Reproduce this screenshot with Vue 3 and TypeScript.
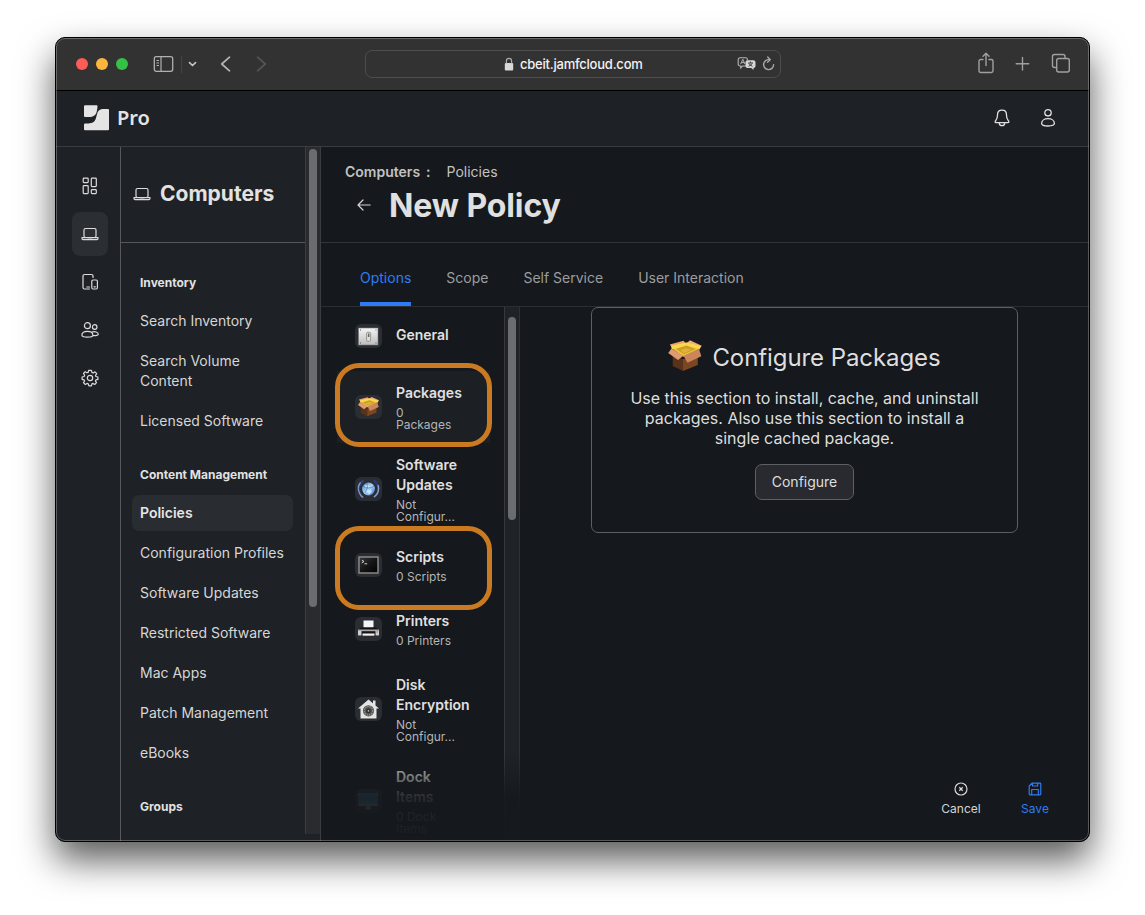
<script setup lang="ts">
interface NavItem { label: string; active?: boolean }
interface NavSection { title: string; items: NavItem[] }
interface Payload { id: string; title: string; status?: string; active?: boolean }

const railItems = ['dashboard', 'computers', 'devices', 'users', 'settings']

const sections: NavSection[] = [
  {
    title: 'Inventory',
    items: [{ label: 'Search Inventory' }, { label: 'Search Volume Content' }, { label: 'Licensed Software' }],
  },
  {
    title: 'Content Management',
    items: [
      { label: 'Policies', active: true },
      { label: 'Configuration Profiles' },
      { label: 'Software Updates' },
      { label: 'Restricted Software' },
      { label: 'Mac Apps' },
      { label: 'Patch Management' },
      { label: 'eBooks' },
    ],
  },
  { title: 'Groups', items: [] },
]

const tabs = ['Options', 'Scope', 'Self Service', 'User Interaction']

const payloads: Payload[] = [
  { id: 'general', title: 'General' },
  { id: 'packages', title: 'Packages', status: '0\nPackages', active: true },
  { id: 'updates', title: 'Software\nUpdates', status: 'Not\nConfigur...' },
  { id: 'scripts', title: 'Scripts', status: '0 Scripts' },
  { id: 'printers', title: 'Printers', status: '0 Printers' },
  { id: 'disk', title: 'Disk\nEncryption', status: 'Not\nConfigur...' },
  { id: 'dock', title: 'Dock\nItems', status: '0 Dock\nItems' },
]
</script>

<template>
  <div class="page">
    <svg class="defs" width="0" height="0" aria-hidden="true">
      <defs>
        <linearGradient id="plate" x1="0" y1="0" x2="0" y2="1"><stop offset="0" stop-color="#f4f4f4" /><stop offset="1" stop-color="#bdbdbd" /></linearGradient>
        <linearGradient id="globe" x1="0" y1="0" x2="1" y2="1"><stop offset="0" stop-color="#4a7fc0" /><stop offset=".5" stop-color="#a8d8f4" /><stop offset="1" stop-color="#3c66c8" /></linearGradient>
        <linearGradient id="term" x1="0" y1="0" x2="1" y2="1"><stop offset="0" stop-color="#3a3a3a" /><stop offset=".5" stop-color="#151515" /><stop offset="1" stop-color="#000" /></linearGradient>
        <linearGradient id="screen" x1="0" y1="0" x2="0" y2="1"><stop offset="0" stop-color="#2a6fa8" /><stop offset="1" stop-color="#49c3ef" /></linearGradient>
        <symbol id="laptop" viewBox="0 0 18 16">
          <rect x="3" y="2.5" width="12" height="9" rx="1.5" />
          <path d="M1 11.6H17V12.4A1.2 1.2 0 0 1 15.8 13.6H2.2A1.2 1.2 0 0 1 1 12.4ZM7 12H11" />
        </symbol>
        <symbol id="box" viewBox="0 0 34 32">
          <path d="M4.700 16V26L15 31V19Z" fill="#5a3219" />
          <path d="M15 19V31L29.800 25V16Z" fill="#7b4723" />
          <path d="M1.800 4.500 15.500.7 18 3.500 4.500 8.500Z" fill="#efa468" />
          <path d="M22 .3 33.700 5.700 31.300 9.500 17.500 4Z" fill="#f0ac7c" />
          <path d="M3.300 8 18.500 2.700 32 8.500 16 17Z" fill="#efc436" />
          <path d="M3 5.800 18.500 2.500 32.800 6 31.500 9 18.500 5.700 4 9.300Z" fill="#f8d94c" />
          <path d="M8 9 18.500 5.500 27.500 9 16 14.200Z" fill="#cc9d2b" />
          <path d="M12.500 10.200 18 8.200 23.500 9.700 16 13.200Z" fill="#dfb33a" />
          <path d="M3.500 8.500 .2 13 10 20 15.500 15.700Z" fill="#df9a70" />
          <path d="M15.500 15.700 31 8.800 33.300 16.300 19.500 22.800Z" fill="#cd855a" />
        </symbol>
      </defs>
    </svg>

    <div class="window">
      <header class="toolbar">
        <div class="lights"><i class="red" /><i class="amber" /><i class="green" /></div>
        <svg class="tb-sidebar" width="66" height="24" viewBox="0 0 66 24" fill="none">
          <rect x="1.300" y="4.700" width="18.400" height="14.600" rx="2" stroke="#b0b0b0" stroke-width="1.300" />
          <path d="M8 4.700V19.300" stroke="#b0b0b0" stroke-width="1.200" />
          <path d="M3.500 8.500H6M3.500 11H6M3.500 13.500H6" stroke="#b0b0b0" />
          <path d="M28.500 3.500V21" stroke="#454545" />
          <path d="M36.500 10.700 39.500 13.500 42.500 10.700" stroke="#c4c4c4" stroke-width="1.700" stroke-linecap="round" stroke-linejoin="round" />
        </svg>
        <svg class="tb-arrows" width="50" height="20" viewBox="0 0 50 20" fill="none" stroke-width="1.700" stroke-linecap="round" stroke-linejoin="round">
          <path d="M9.500 3.200 1.700 10 9.500 16.800" stroke="#b4b4b4" />
          <path d="M37.500 3.200 45.300 10 37.500 16.800" stroke="#555" />
        </svg>
        <div class="address">
          <svg class="lock" width="10" height="14" viewBox="0 0 10 14"><rect x=".8" y="6" width="8.400" height="7.500" rx="1" fill="#d8d8d8" /><path d="M2.400 6.500V3.900A2.600 2.600 0 0 1 7.600 3.900V6.500" fill="none" stroke="#aaa" stroke-width="1.200" /></svg>
          <span>cbeit.jamfcloud.com</span>
          <svg class="addr-tools" width="40" height="18" viewBox="0 0 40 18" fill="none">
            <path d="M10 11H5.500L3.800 13V11H3A1.800 1.800 0 0 1 1.200 9.200V4.600A1.800 1.800 0 0 1 3 2.800H8.600A1.800 1.800 0 0 1 10.400 4.600V5" stroke="#b5b5b5" stroke-width="1.100" />
            <path d="M3.600 9.200 5.800 4.300 8 9.200M4.300 7.600H7.300" stroke="#b5b5b5" />
            <path d="M10.500 5.200H16.500A2 2 0 0 1 18.500 7.200V11A2 2 0 0 1 16.500 13V15L14.300 13H10.500A2 2 0 0 1 8.500 11V7.200A2 2 0 0 1 10.500 5.200Z" fill="#d6d6d6" />
            <path d="M11 8H16M13.500 6.500V8M12 8.500Q13 10.500 15.500 11.300M15 8.500Q14 10.500 11.500 11.300" stroke="#333" stroke-width=".9" />
            <path d="M32.500 4.700A5 5 0 1 0 36.600 9.800" stroke="#a8a8a8" stroke-width="1.400" stroke-linecap="round" />
            <path d="M30.700 2 33.300 4.800 30.500 7.300" stroke="#a8a8a8" stroke-width="1.300" stroke-linecap="round" stroke-linejoin="round" />
          </svg>
        </div>
        <svg class="tb-right" width="94" height="24" viewBox="0 0 94 24" fill="none" stroke="#a0a0a0" stroke-width="1.400" stroke-linecap="round" stroke-linejoin="round">
          <path d="M6 7.500H3.700A1.700 1.700 0 0 0 2 9.200V18.800A1.700 1.700 0 0 0 3.700 20.500H14.300A1.700 1.700 0 0 0 16 18.800V9.200A1.700 1.700 0 0 0 14.300 7.500H12M9 13.500V1.500M6 4.200 9 1.300 12 4.200" />
          <path d="M39.200 11.700H51.700M45.500 5.500V18" />
          <path d="M79.500 15.500H77.500A2 2 0 0 1 75.500 13.500V4.500A2 2 0 0 1 77.500 2.500H86A2 2 0 0 1 88 4.500V6.500" />
          <rect x="79.700" y="6.500" width="12.600" height="13.500" rx="2" />
        </svg>
      </header>

      <header class="app-header">
        <svg width="25" height="26" viewBox="0 0 25 26" fill="#e4e4e4">
          <path d="M1 .2H12.600Q13.500.2 13.500 1.100C13 8 12 11.300 6.800 12H1Q0 12 0 11V1.200Q0 .2 1 .2Z" />
          <path d="M0 19.500Q0 18.600 1 18.600C12 18.600 11.200 15.500 13.200 8.500C14.300 5 16.500 4.200 19.500 4.100H24Q25 4.100 25 5.100V24.300Q25 25.300 24 25.300H1Q0 25.300 0 24.300Z" />
        </svg>
        <span class="brand">Pro</span>
        <svg class="bell" width="18" height="20" viewBox="0 0 18 20" fill="none" stroke="#e0e0e0" stroke-width="1.300" stroke-linejoin="round">
          <path d="M9 2.200C6.300 2.200 4.500 4.200 4.500 7C4.500 11 3.500 11.500 2.300 13.200Q1.800 14.600 3 14.700H15Q16.200 14.600 15.700 13.200C14.500 11.500 13.500 11 13.500 7C13.500 4.200 11.700 2.200 9 2.200ZM6.300 15A2.700 2.700 0 0 0 11.700 15" />
        </svg>
        <svg class="person" width="18" height="20" viewBox="0 0 18 20" fill="none" stroke="#e0e0e0" stroke-width="1.300">
          <circle cx="9" cy="4.800" r="3.200" /><path d="M2.600 15.600C2.600 12.500 5.500 10.700 9 10.700S15.400 12.500 15.400 15.600C15.400 17 13.500 18 9 18S2.600 17 2.600 15.600Z" />
        </svg>
      </header>

      <div class="body">
        <nav class="rail">
          <div v-for="item in railItems" :key="item" class="rail-item" :class="{ active: item === 'computers' }">
            <svg width="18" height="18" viewBox="0 0 18 18" class="line-icon">
              <g v-if="item === 'dashboard'">
                <rect x="2.200" y="1.200" width="5" height="4.400" rx=".8" /><rect x="2.200" y="8.600" width="5" height="8" rx=".8" /><rect x="10.300" y="1.200" width="5" height="8.400" rx=".8" /><rect x="10.300" y="12.600" width="5" height="4" rx=".8" />
              </g>
              <use v-else-if="item === 'computers'" href="#laptop" x="0" y="1" width="18" height="16" />
              <g v-else-if="item === 'devices'">
                <path d="M12 4.500V3A1.500 1.500 0 0 0 10.500 1.500H3.500A1.500 1.500 0 0 0 2 3V14.500A1.500 1.500 0 0 0 3.500 16H8.500M5.800 14H8.500" /><rect x="10.800" y="7" width="5.600" height="9" rx="1.200" /><path d="M13 13.800H14.300" />
              </g>
              <g v-else-if="item === 'users'">
                <circle cx="6.400" cy="4.700" r="3" /><circle cx="13.700" cy="6" r="2.300" /><path d="M.9 14.300C.9 11.800 3.300 10.400 6.400 10.400S11.900 11.800 11.900 14.300C11.900 15.600 9.500 16.200 6.400 16.200S.9 15.600.9 14.300ZM10.800 11C14 9.900 17.300 11.200 17.300 13.300C17.300 14.400 15 14.800 12 14.600" />
              </g>
              <g v-else>
                <circle cx="9" cy="9" r="2.700" />
                <path d="M7.600 1.300H10.400L10.900 3.400 12.200 4 14 2.800 15.700 4.600 14.500 6.500 14.900 7.500 16.900 8V10.400L14.900 10.900 14.400 12 15.500 13.700 13.700 15.500 12 14.400 10.900 14.900 10.400 16.900H7.900L7.300 14.900 6.100 14.400 4.300 15.500 2.500 13.700 3.600 12 3.100 10.900 1.100 10.400V8L3.100 7.500 3.600 6.300 2.500 4.500 4.200 2.700 6 3.800 7.200 3.400Z" />
              </g>
            </svg>
          </div>
        </nav>

        <aside class="sidebar">
          <div class="side-main">
            <div class="side-head">
              <svg width="18" height="16" class="line-icon"><use href="#laptop" width="18" height="16" /></svg>
              <h2>Computers</h2>
            </div>
            <div v-for="section in sections" :key="section.title" class="side-section">
              <h3>{{ section.title }}</h3>
              <a v-for="item in section.items" :key="item.label" :class="{ active: item.active }">{{ item.label }}</a>
            </div>
          </div>
          <div class="track side-track"><div class="thumb" /></div>
        </aside>

        <main class="main">
          <div class="page-head">
            <div class="crumbs"><b>Computers</b><b class="colon">:</b><span>Policies</span></div>
            <div class="title-row">
              <svg width="16" height="14" viewBox="0 0 16 14" fill="none" stroke="#d4d4d4" stroke-width="1.200" stroke-linecap="round" stroke-linejoin="round"><path d="M14.200 7H2M7 2 2 7 7 12" /></svg>
              <h1>New Policy</h1>
            </div>
          </div>
          <div class="tabs">
            <span v-for="(tab, i) in tabs" :key="tab" class="tab" :class="{ active: i === 0 }">{{ tab }}</span>
          </div>
          <div class="work">
            <div class="list">
              <div v-for="p in payloads" :key="p.id" class="row" :class="[p.id, { active: p.active }]">
                <div class="tile">
                  <svg width="27" height="24" viewBox="0 0 27 24">
                    <g v-if="p.id === 'general'">
                      <rect x="3.500" y="4" width="19.500" height="17" fill="url(#plate)" stroke="#777" stroke-width=".6" />
                      <rect x="11.600" y="8.300" width="4" height="9" rx="1" fill="#ddd" stroke="#888" stroke-width=".8" /><rect x="12.900" y="9.500" width="1.500" height="3.500" fill="#666" />
                      <path d="M5 6H6M20.500 6H21.500M5 19H6M20.500 19H21.500" stroke="#555" />
                    </g>
                    <use v-else-if="p.id === 'packages'" href="#box" x="2.500" y="1.800" width="22" height="20" />
                    <g v-else-if="p.id === 'updates'">
                      <path d="M8.500 3.500A10 10 0 0 0 8.500 20.500" fill="none" stroke="#34407c" stroke-width="2.400" /><path d="M5.500 5.500A9.500 9.500 0 0 0 4.500 16Q5.500 19 8 20.500" fill="none" stroke="#7f9cc4" stroke-width="1.200" />
                      <path d="M18.500 3.500A10 10 0 0 1 18.500 20.500" fill="none" stroke="#2e3774" stroke-width="2.400" /><path d="M23 8A10 10 0 0 1 19 20" fill="none" stroke="#86a6cc" stroke-width="1.400" />
                      <circle cx="13.500" cy="12" r="6.400" fill="url(#globe)" />
                      <path d="M9 9 13 7.500 15 10 11 11ZM11 14 16 12.500 17 15 14 17.500Z" fill="#e6f5ff" opacity=".7" /><path d="M8 9Q14 13 19 9M10 16Q14 10 12 6" fill="none" stroke="#2d55ac" stroke-width=".5" />
                    </g>
                    <g v-else-if="p.id === 'scripts'">
                      <rect x="4" y="4" width="19" height="16" fill="url(#term)" stroke="#8f8f8f" stroke-width="1.400" />
                      <path d="M6.800 7.200 9 8.500 6.800 9.800M9.500 10.800H12.200" fill="none" stroke="#e8e8e8" stroke-width=".9" />
                    </g>
                    <g v-else-if="p.id === 'printers'">
                      <path d="M6 10.500H21L24 13V19H3V13Z" fill="#151515" /><rect x="8.500" y="3.500" width="10" height="7" fill="#f5f5f5" />
                      <path d="M7 10.500H20V12.500H7Z" fill="#111" /><rect x="3" y="12.500" width="21" height="1.700" fill="#a9a9ad" /><path d="M3 14H6.500V18.500H3ZM20.500 14H24V18.500H20.500Z" fill="#cfcfd3" />
                      <rect x="7.500" y="16.500" width="12" height="2.200" fill="#f4f4f4" /><rect x="21.500" y="13.800" width="1.400" height="2" fill="#c58888" />
                    </g>
                    <g v-else-if="p.id === 'disk'">
                      <path d="M13.500 2.500 24 11.500H21.500V21.500H5.500V11.500H3ZM18 3.500H20.500V9H18Z" fill="#e4e4e4" />
                      <circle cx="13.500" cy="13.800" r="5.600" fill="#555" /><circle cx="13.500" cy="13.800" r="4.300" fill="none" stroke="#8f8f8f" stroke-width="1.200" stroke-dasharray="1.500 .8" />
                      <circle cx="13.500" cy="13.800" r="2.400" fill="#2e2e2e" /><circle cx="13.500" cy="13.800" r=".9" fill="#bbb" />
                    </g>
                    <g v-else>
                      <rect x="3.500" y="4" width="19" height="13" fill="#ccc" /><rect x="4" y="4" width="18" height="11" fill="url(#screen)" /><path d="M11.500 17H15L16.500 20.500H10Z" fill="#bbb" />
                    </g>
                  </svg>
                </div>
                <div class="row-text">
                  <div class="row-title">{{ p.title }}</div>
                  <div v-if="p.status" class="row-status">{{ p.status }}</div>
                </div>
              </div>
              <div class="highlight first" />
              <div class="highlight second" />
            </div>
            <div class="track list-track"><div class="thumb" /></div>
            <div class="detail">
              <section class="card">
                <div class="card-title"><svg width="34" height="32"><use href="#box" width="34" height="32" /></svg><h2>Configure Packages</h2></div>
                <p>Use this section to install, cache, and uninstall<br>packages. Also use this section to install a<br>single cached package.</p>
                <button>Configure</button>
              </section>
            </div>
            <div class="fade" />
            <footer class="actions">
              <div class="action">
                <svg width="16" height="16" viewBox="0 0 16 16" fill="none" stroke="#d8d8d8" stroke-width="1.200"><circle cx="8" cy="8" r="6" /><path d="M6.300 6.300 9.700 9.700M9.700 6.300 6.300 9.700" stroke-width="1.300" /></svg>
                <span>Cancel</span>
              </div>
              <div class="action save">
                <svg width="16" height="16" viewBox="0 0 16 16" fill="none" stroke="#2f7bf6" stroke-width="1.200" stroke-linejoin="round"><path d="M5 2.200H13A.8.8 0 0 1 13.800 3V13A.8.8 0 0 1 13 13.800H3A.8.8 0 0 1 2.200 13V5ZM5.500 2.500V5H10.700V2.500M4.700 13.500V8.500H11.300V13.500" /></svg>
                <span>Save</span>
              </div>
            </footer>
          </div>
        </main>
      </div>
    </div>
  </div>
</template>

<style>
html, body { margin: 0; background: #fff; overflow: hidden; }
</style>

<style scoped>
* { box-sizing: border-box; }
h1, h2, h3, p { margin: 0; }
svg { display: block; flex: none; }
.defs { position: absolute; }
.page { width: 1145px; height: 915px; padding: 37px 55px; background: #fff; overflow: hidden; font-family: Inter, "Liberation Sans", sans-serif; color: #dedede; }
.window { position: relative; width: 1035px; height: 805px; border: 1px solid #000; border-radius: 10px; overflow: hidden; background: #15181c; box-shadow: 0 18px 36px rgba(0, 0, 0, .65); display: flex; flex-direction: column; }
.window::after { content: ""; position: absolute; inset: 0; border-radius: 9px; border: 1px solid rgba(255, 255, 255, .28); pointer-events: none; }

.toolbar { flex: none; height: 53px; background: #323232; border-bottom: 1px solid #000; display: flex; align-items: center; }
.lights { display: flex; gap: 8px; margin-left: 20px; }
.lights i { width: 12px; height: 12px; border-radius: 50%; }
.red { background: #fc5b57; }
.amber { background: #fcb63e; }
.green { background: #34c245; }
.tb-sidebar { margin-left: 25px; }
.tb-arrows { margin-left: 1px; }
.address { margin-left: 95px; width: 416px; height: 28px; border: 1px solid #4d4d4d; border-radius: 7px; display: flex; align-items: center; padding-left: 138px; font-size: 13px; font-weight: 500; letter-spacing: -.23px; color: #f2f2f2; }
.address span { margin-left: 6px; }
.addr-tools { margin-left: auto; margin-right: 3px; }
.tb-right { margin-left: 196px; }

.app-header { flex: none; height: 56px; background: #1e2125; border-bottom: 1px solid #393c40; display: flex; align-items: center; padding: 0 32px 2px 28px; }
.brand { margin-left: 8px; font-family: "Noto Sans", sans-serif; font-weight: 600; font-size: 20px; line-height: 24px; letter-spacing: -.1px; color: #e4e4e4; }
.bell { margin-left: auto; }
.person { margin-left: 28px; }

.body { flex: 1; min-height: 0; display: flex; }
.line-icon { fill: none; stroke: #dcdcdc; stroke-width: 1.2; stroke-linejoin: round; stroke-linecap: round; }
.rail { width: 65px; background: #1e2125; border-right: 1px solid #55575a; padding: 17px 0 0 16px; display: flex; flex-direction: column; gap: 4px; }
.rail-item { width: 36px; height: 44px; border-radius: 8px; display: flex; align-items: center; justify-content: center; }
.rail-item.active { background: #2b2e32; }

.sidebar { width: 200px; background: #1e2125; display: flex; border-right: 1px solid #3a3c40; overflow: hidden; }
.side-main { width: 184px; flex: none; }
.side-head { height: 96px; border-bottom: 1px solid #55575a; display: flex; align-items: center; gap: 9px; padding: 0 0 2px 12px; }
.side-head h2 { font-size: 21px; line-height: 28px; font-weight: 700; color: #e2e2e2; }
.side-section { padding: 26px 12px 0 11px; }
.side-head + .side-section { padding-top: 30px; }
.side-section h3 { font-size: 12px; line-height: 20px; font-weight: 700; margin: 0 0 10px 8px; color: #e2e2e2; white-space: nowrap; }
.side-section a { display: block; padding: 8px; font-size: 14px; line-height: 20px; border-radius: 7px; margin-bottom: 4px; color: #d6d6d6; }
.side-section a:last-child { margin-bottom: 0; }
.side-section a.active { background: #292c30; font-weight: 600; color: #e6e6e6; }
.track { flex: none; background: #25282c; }
.thumb { width: 8px; border-radius: 4px; background: #6b6c6f; margin-left: 3px; }
.side-track { width: 15px; height: 687px; border-left: 1px solid #3a3c40; background: #292b2f; padding-top: 2px; }
.side-track .thumb { height: 458px; }

.main { flex: 1; display: flex; flex-direction: column; background: #15181c; }
.page-head { height: 96px; border-bottom: 1px solid #303338; padding: 15px 0 0 24px; }
.crumbs { display: flex; font-size: 14px; line-height: 20px; color: #c2c2c2; }
.crumbs b { font-weight: 600; }
.crumbs .colon { margin: 0 16px 0 6px; }
.title-row { display: flex; align-items: center; margin: 4px 0 0 11px; height: 40px; }
.title-row svg { margin-top: -2px; }
.title-row h1 { margin-left: 17px; font-size: 32px; line-height: 40px; font-weight: 700; letter-spacing: -.1px; color: #e0e0e0; }
.tabs { height: 64px; border-bottom: 1px solid #2a2d31; display: flex; gap: 35px; padding-left: 39px; font-size: 14px; line-height: 20px; color: #9c9d9f; }
.tab { padding-top: 25px; height: 63px; }
.tab.active { color: #2f7bf6; border-bottom: 4px solid #2f7bf6; }
.work { position: relative; flex: 1; min-height: 0; display: flex; overflow: hidden; }
.list { position: relative; width: 183px; }
.row { display: flex; align-items: center; padding: 12px 0 12px 18px; margin: 0 14px 0 16px; }
.row.active { background: #1c1f23; }
.row.general { padding: 17px 0 23px 18px; height: 64px; }
.row.general .row-title { padding-bottom: 2px; }
.row.scripts, .row.printers { margin-bottom: 4px; }
.tile { width: 27px; height: 24px; border-radius: 6px; background: #2a2d31; flex: none; }
.row-text { margin-left: 14px; white-space: pre-line; }
.row-title { font-size: 14px; line-height: 20px; font-weight: 600; color: #e0e0e0; }
.row-status { margin-top: 4px; font-size: 12px; line-height: 12px; color: #b4b5b6; }
.highlight { position: absolute; left: 14px; width: 157px; height: 84px; border: 5px solid #ca7b22; border-radius: 24px; }
.highlight.first { top: 56px; }
.highlight.second { top: 219px; }
.list-track { width: 16px; border-left: 1px solid #36393d; border-right: 1px solid #2e3135; background: #1f2226; padding-top: 10px; }
.list-track .thumb { height: 203px; }
.detail { flex: 1; display: flex; justify-content: center; align-items: flex-start; }
.card { width: 427px; height: 226px; border: 1px solid #5d6063; border-radius: 7px; display: flex; flex-direction: column; align-items: center; padding-top: 31px; }
.card-title { display: flex; align-items: center; height: 36px; gap: 10px; }
.card-title svg { margin-top: -3px; }
.card-title h2 { font-size: 24px; line-height: 36px; font-weight: 400; letter-spacing: -.08px; padding-top: 2px; }
.card p { margin-top: 13px; text-align: center; font-size: 16px; line-height: 20px; white-space: nowrap; }
.card button { margin-top: 16px; width: 99px; height: 36px; padding: 0; border: 1px solid #5d6063; border-radius: 7px; background: #292a2f; color: #dedede; font: 400 14px/20px Inter, sans-serif; }
.fade { position: absolute; left: 0; right: 0; bottom: 0; height: 90px; background: linear-gradient(rgba(21, 24, 28, 0), rgba(21, 24, 28, .9) 46px, rgba(21, 24, 28, .96)); }
.actions { position: absolute; right: 24px; bottom: 24px; display: flex; font-size: 12px; line-height: 16px; }
.action { width: 60px; margin-left: 14px; display: flex; flex-direction: column; align-items: center; gap: 4px; color: #d4d4d4; }
.action.save { color: #2f7bf6; }
</style>
